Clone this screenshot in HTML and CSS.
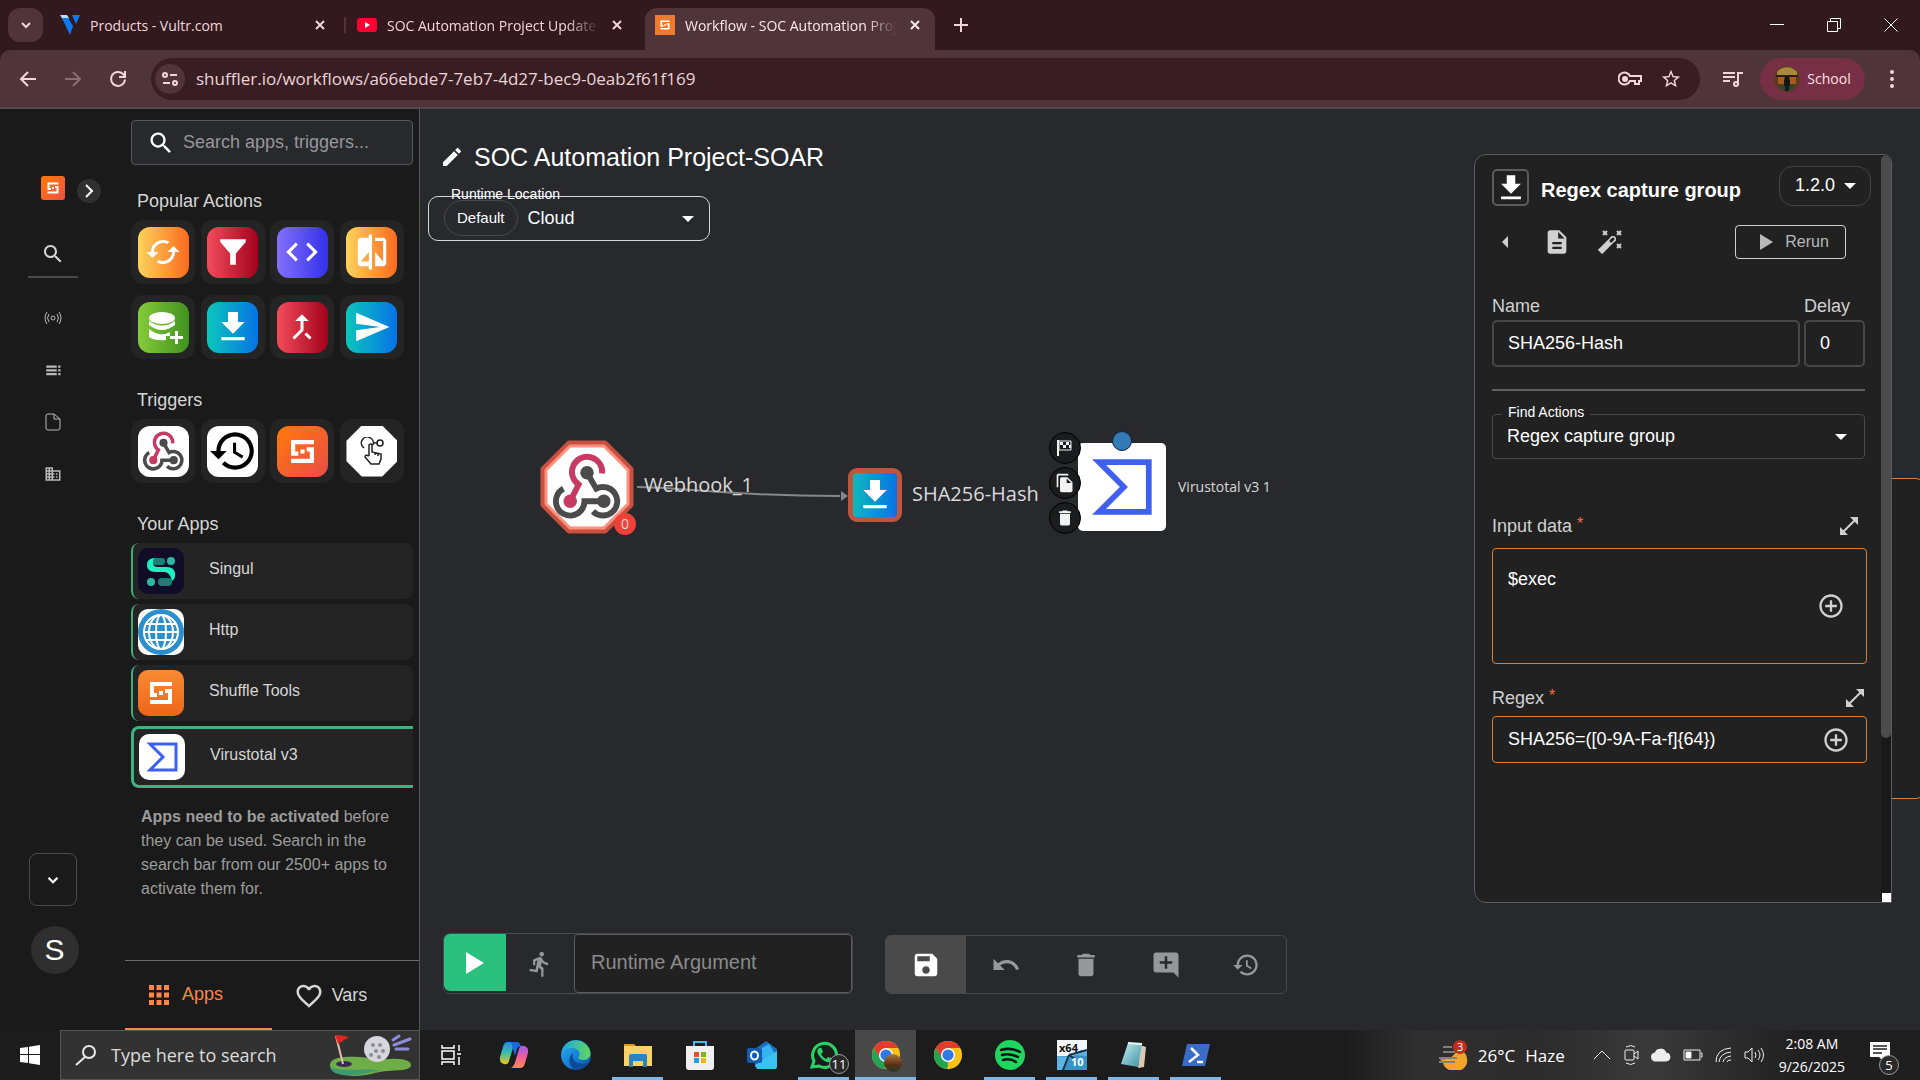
FILE: index.html
```html
<!DOCTYPE html>
<html lang="en">
<head>
  <meta charset="UTF-8" />
  <meta name="viewport" content="width=device-width, initial-scale=1.0" />
  <title>Workflow - SOC Automation Project-SOAR</title>
  <link rel="stylesheet" href="styles.css">
</head>
<body>

  <!-- shared icons -->
  <svg class="defs" width="0" height="0" aria-hidden="true">
    <defs>
      <linearGradient id="g-edge" x1="0" y1="0" x2="1" y2="1"><stop offset="0" stop-color="#2bb6e8"/><stop offset=".5" stop-color="#1583d8"/><stop offset="1" stop-color="#0c4ea0"/></linearGradient>
      <linearGradient id="g-edge2"><stop offset="0" stop-color="#1fa6e4"/><stop offset="1" stop-color="#60d95c"/></linearGradient>
      <linearGradient id="g-cop1" x1="0" y1="0" x2="0" y2="1"><stop offset="0" stop-color="#1b8df0"/><stop offset=".5" stop-color="#38c0a5"/><stop offset="1" stop-color="#f2c515"/></linearGradient>
      <linearGradient id="g-cop2" x1="0" y1="0" x2="0" y2="1"><stop offset="0" stop-color="#a05cf0"/><stop offset=".5" stop-color="#ee5f9c"/><stop offset="1" stop-color="#fb8a4c"/></linearGradient>
      <linearGradient id="g-note" x1="0" y1="0" x2="1" y2="1"><stop offset="0" stop-color="#c5eef2"/><stop offset="1" stop-color="#3d8ea3"/></linearGradient>
    </defs>
    <symbol id="i-search" viewBox="0 0 24 24"><path d="M15.5 14h-.79l-.28-.27C15.41 12.59 16 11.11 16 9.5 16 5.91 13.09 3 9.5 3S3 5.91 3 9.5 5.91 16 9.5 16c1.61 0 3.09-.59 4.23-1.57l.27.28v.79l5 4.99L20.49 19l-4.99-5zm-6 0C7.01 14 5 11.99 5 9.5S7.01 5 9.5 5 14 7.01 14 9.5 11.99 14 9.5 14z"/></symbol>
    <symbol id="i-close" viewBox="0 0 24 24"><path d="M6 6l12 12M18 6L6 18" fill="none" stroke="currentColor" stroke-width="3"/></symbol>
    <symbol id="i-chevron" viewBox="0 0 24 24"><path d="M6 9l6 6 6-6" fill="none" stroke="currentColor" stroke-width="3"/></symbol>
    <symbol id="i-shuffle" viewBox="0 0 24 24"><path d="M23 3H3v11h5M1 21h20V10h-5" fill="none" stroke="currentColor" stroke-width="4"/><path d="M10 10h4v4h-4z"/></symbol>
    <symbol id="i-download" viewBox="0 0 24 24"><path d="M19 9h-4V3H9v6H5l7 7 7-7zM5 18v2h14v-2H5z"/></symbol>
    <symbol id="i-history" viewBox="0 0 24 24"><path d="M13 3c-4.97 0-9 4.03-9 9H1l3.89 3.89.07.14L9 12H6c0-3.87 3.13-7 7-7s7 3.13 7 7-3.13 7-7 7c-1.93 0-3.68-.79-4.94-2.06l-1.42 1.42C8.27 19.99 10.51 21 13 21c4.97 0 9-4.03 9-9s-4.03-9-9-9zm-1 5v5l4.28 2.54.72-1.21-3.5-2.08V8H12z"/></symbol>
    <symbol id="i-trash" viewBox="0 0 24 24"><path d="M6 19c0 1.1.9 2 2 2h8c1.1 0 2-.9 2-2V7H6v12zM19 4h-3.5l-1-1h-5l-1 1H5v2h14V4z"/></symbol>
    <symbol id="i-plus" viewBox="0 0 24 24"><path d="M13 7h-2v4H7v2h4v4h2v-4h4v-2h-4V7zm-1-5C6.48 2 2 6.48 2 12s4.48 10 10 10 10-4.48 10-10S17.52 2 12 2zm0 18c-4.41 0-8-3.59-8-8s3.59-8 8-8 8 3.59 8 8-3.59 8-8 8z"/></symbol>
    <symbol id="i-expand" viewBox="0 0 24 24"><path d="M21 11V3h-8l3.29 3.29-10 10L3 13v8h8l-3.29-3.29 10-10z"/></symbol>
    <symbol id="i-caret" viewBox="0 0 12 6"><path d="M0 0h12L6 6z"/></symbol>
    <symbol id="i-webhook" viewBox="0 0 100 100">
      <g fill="none" stroke-width="7">
        <path d="M68 34A18 18 0 1 0 40 47L30 67" stroke="#c73a63"/>
        <path d="M22 52A17 17 0 1 0 47 67H70" stroke="#4b4b4b"/>
        <path d="M50 33l11 19A17 17 0 1 1 57 79" stroke="#4b4b4b"/>
      </g>
      <circle cx="50" cy="33" r="8" fill="#4b4b4b"/><circle cx="30" cy="67" r="8" fill="#c73a63"/><circle cx="70" cy="67" r="8" fill="#4b4b4b"/>
    </symbol>
    <symbol id="i-virustotal" viewBox="0 0 46 46"><path d="M11 10h26v26H11l13-13z" fill="none" stroke="#3f5fef" stroke-width="3"/></symbol>
    <symbol id="i-chrome" viewBox="0 0 32 32">
      <circle cx="16" cy="16" r="15" fill="#fbc116"/>
      <path d="M3 8.500A15 15 0 0 1 29 8.500H16L9.500 19.700z" fill="#e33b2e"/>
      <path d="M3 8.500l7 11.800 6 3.200-.5 7.500A15 15 0 0 1 3 8.500z" fill="#23a455"/>
      <path d="M16 31l6.500-11.500" stroke="#fbc116" stroke-width="2"/>
      <circle cx="16" cy="16" r="7.500" fill="#fff"/><circle cx="16" cy="16" r="6" fill="#2f78e8"/>
    </symbol>
  </svg>

  <header class="browser">
    <div class="tab-strip">
      <button class="tab-list" aria-label="Search tabs"><svg width="16" height="16"><use href="#i-chevron"/></svg></button>
      <div class="tab tab-first">
        <svg width="20" height="20" viewBox="0 0 20 20"><path d="M0 0h7l2 3-4 5z" fill="#b8dcff"/><path d="M2 3h6l5 8-3 9z" fill="#0a7cf5"/><path d="M12 0h8l-4 9z" fill="#0a7cf5"/></svg>
        <span class="tab-title">Products - Vultr.com</span>
        <button class="tab-close" aria-label="Close tab"><svg width="16" height="16"><use href="#i-close"/></svg></button>
      </div>
      <div class="tab tab-second">
        <svg width="20" height="20" viewBox="0 0 20 20"><rect y="3" width="20" height="14" rx="3" fill="#ff0033"/><path d="M8 7l5 3-5 3z" fill="#fff"/></svg>
        <span class="tab-title">SOC Automation Project Update</span>
        <button class="tab-close" aria-label="Close tab"><svg width="16" height="16"><use href="#i-close"/></svg></button>
      </div>
      <div class="tab tab-active">
        <span class="favicon"><svg width="10" height="10"><use href="#i-shuffle"/></svg></span>
        <span class="tab-title">Workflow - SOC Automation Project</span>
        <button class="tab-close" aria-label="Close tab"><svg width="16" height="16"><use href="#i-close"/></svg></button>
      </div>
      <button class="new-tab" aria-label="New tab"><svg width="14" height="14" viewBox="0 0 14 14"><path d="M7 0v14M0 7h14" stroke="currentColor" stroke-width="2"/></svg></button>
      <div class="window-buttons">
        <button aria-label="Minimize"><svg width="14" height="14" viewBox="0 0 14 14"><path d="M0 6.500h14"/></svg></button>
        <button aria-label="Restore"><svg width="14" height="14" viewBox="0 0 14 14"><path d="M.5 3.500h10v10H.5zM3.500 3V.5h10v10H11"/></svg></button>
        <button aria-label="Close"><svg width="14" height="14" viewBox="0 0 14 14"><path d="M.5.5l13 13M13.500.5l-13 13"/></svg></button>
      </div>
    </div>

    <div class="toolbar">
      <button class="nav-btn" aria-label="Back"><svg width="18" height="18" viewBox="0 0 18 18"><path d="M17 9H2M9 2L2 9l7 7"/></svg></button>
      <button class="nav-btn dim" aria-label="Forward"><svg width="18" height="18" viewBox="0 0 18 18"><path d="M1 9h15M9 2l7 7-7 7"/></svg></button>
      <button class="nav-btn" aria-label="Reload"><svg width="18" height="18" viewBox="0 0 18 18"><path d="M16 9.500A7 7 0 1 1 14 4l2 2.500M16 1v6h-6"/></svg></button>
      <div class="omnibox">
        <button class="site-info" aria-label="Site information"><svg width="18" height="18" viewBox="0 0 18 18" fill="none" stroke="currentColor" stroke-width="2"><circle cx="4" cy="5" r="2"/><path d="M9 5h7M2 13h7"/><circle cx="14" cy="13" r="2"/></svg></button>
        <input type="text" aria-label="Address" value="shuffler.io/workflows/a66ebde7-7eb7-4d27-bec9-0eab2f61f169">
        <button aria-label="Passwords"><svg width="24" height="16" viewBox="0 0 24 16" fill="none" stroke="currentColor" stroke-width="2"><path d="M12 5h11v5h-2v3h-4v-3h-5A6 6 0 1 1 12 5z"/><circle cx="7" cy="8" r="2" fill="currentColor"/></svg></button>
        <button aria-label="Bookmark"><svg width="22" height="22" viewBox="0 0 24 24"><path d="M22 9.240l-7.190-.62L12 2 9.190 8.630 2 9.240l5.460 4.730L5.820 21 12 17.270 18.180 21l-1.630-7.030L22 9.240zM12 15.400l-3.760 2.270 1-4.280-3.320-2.880 4.380-.38L12 6.100l1.710 4.040 4.380.38-3.320 2.880 1 4.280L12 15.400z"/></svg></button>
      </div>
      <button class="nav-btn media" aria-label="Media controls"><svg width="20" height="18" viewBox="0 0 20 18"><path d="M0 3h12M0 7h12M0 11h7M15 14V3h5"/><circle cx="13" cy="14" r="2"/></svg></button>
      <button class="profile">
        <svg width="26" height="26" viewBox="0 0 26 26"><circle cx="13" cy="13" r="13" fill="#5a3c1c"/><path d="M3 6a13 13 0 0 1 20 0v3H3z" fill="#a8893a"/><path d="M2 9h22v2H2z" fill="#2e1d10"/><path d="M4 11h18v7H4z" fill="#a85a20"/><path d="M11 10h4l1 5v8h-6v-8z" fill="#171510"/><path d="M4 20h18a13 13 0 0 1-18 0z" fill="#1b4a40"/><path d="M11 17h4v8h-4z" fill="#101a1a"/></svg>
        School
      </button>
      <button class="more" aria-label="Menu"><svg width="6" height="20" viewBox="0 0 6 20"><circle cx="3" cy="3" r="2"/><circle cx="3" cy="10" r="2"/><circle cx="3" cy="17" r="2"/></svg></button>
    </div>
  </header>

  <main class="page">
    <nav class="rail">
      <a href="#" class="rail-logo" aria-label="Shuffle"><svg width="12" height="12"><use href="#i-shuffle"/></svg></a>
      <button class="rail-toggle" aria-label="Expand"><svg width="14" height="14" viewBox="0 0 14 14"><path d="M4 1l6 6-6 6" fill="none" stroke="currentColor" stroke-width="2"/></svg></button>
      <button class="rail-search" aria-label="Search"><svg width="24" height="24"><use href="#i-search"/></svg></button>
      <div class="rail-links">
        <a href="#" aria-label="Status"><svg width="18" height="18" viewBox="0 0 18 18" fill="none" stroke="currentColor"><circle cx="9" cy="9" r="2"/><path d="M5 5q-3 4 0 8M13 5q3 4 0 8M3 3q-4 6 0 12M15 3q4 6 0 12"/></svg></a>
        <a href="#" aria-label="Workflows"><svg width="18" height="18" viewBox="0 0 24 24"><path d="M3 9h14V6H3v3zm0 5h14v-3H3v3zm0 5h14v-3H3v3zm16 0h3v-3h-3v3zm0-13v3h3V6h-3zm0 8h3v-3h-3v3z"/></svg></a>
        <a href="#" aria-label="Files"><svg width="18" height="18" viewBox="0 0 18 18" fill="none" stroke="currentColor"><path d="M10 1H4a2 2 0 0 0-2 2v12a2 2 0 0 0 2 2h10a2 2 0 0 0 2-2V6zM10 1v5h6"/></svg></a>
        <a href="#" aria-label="Organization"><svg width="18" height="18" viewBox="0 0 24 24"><path d="M12 7V3H2v18h20V7H12zM6 19H4v-2h2v2zm0-4H4v-2h2v2zm0-4H4V9h2v2zm0-4H4V5h2v2zm4 12H8v-2h2v2zm0-4H8v-2h2v2zm0-4H8V9h2v2zm0-4H8V5h2v2zm10 12h-8v-2h2v-2h-2v-2h2v-2h-2V9h8v10zm-2-8h-2v2h2v-2zm0 4h-2v2h2v-2z"/></svg></a>
      </div>
      <div class="rail-bottom">
        <button class="rail-more" aria-label="Switch organization"><svg width="18" height="18"><use href="#i-chevron"/></svg></button>
        <button class="avatar">S</button>
      </div>
    </nav>

    <aside class="sidebar">
      <div class="sidebar-body">
        <div class="app-search">
          <svg width="28" height="28"><use href="#i-search"/></svg>
          <input type="text" aria-label="Search apps" placeholder="Search apps, triggers...">
        </div>

        <h2 class="first">Popular Actions</h2>
        <div class="tiles">
          <button aria-label="Repeat"><span class="tile amber"><svg width="36" height="36" viewBox="0 0 24 24"><path d="M19 8l-4 4h3c0 3.310-2.690 6-6 6-1.010 0-1.970-.25-2.800-.7l-1.460 1.460C8.970 19.540 10.430 20 12 20c4.420 0 8-3.580 8-8h3l-4-4zM6 12c0-3.310 2.690-6 6-6 1.010 0 1.970.25 2.800.7l1.460-1.460C15.030 4.460 13.570 4 12 4c-4.420 0-8 3.580-8 8H1l4 4 4-4H6z"/></svg></span></button>
          <button aria-label="Filter"><span class="tile red"><svg width="34" height="34" viewBox="0 0 24 24"><path d="M3 3h18v2l-7 8v8h-4v-8L3 5z"/></svg></span></button>
          <button aria-label="Run code"><span class="tile violet"><svg width="38" height="38" viewBox="0 0 24 24"><path d="M9.400 16.600L4.800 12l4.600-4.600L8 6l-6 6 6 6 1.400-1.400zm5.200 0l4.600-4.600-4.600-4.600L16 6l6 6-6 6-1.400-1.400z"/></svg></span></button>
          <button aria-label="Compare"><span class="tile amber"><svg width="38" height="38" viewBox="0 0 24 24"><path d="M10 3H5c-1.100 0-2 .9-2 2v14c0 1.100.9 2 2 2h5v2h2V1h-2v2zm0 15H5l5-6v6zm9-15h-5v2h5v13l-5-6v9h5c1.100 0 2-.9 2-2V5c0-1.100-.9-2-2-2z"/></svg></span></button>
          <button aria-label="Add to database"><span class="tile green"><svg width="40" height="40" viewBox="0 0 40 40"><ellipse cx="19" cy="11" rx="13" ry="6"/><path d="M6 14q13 9 26 0v4q-13 10-26 0zM6 22q11 9 21 3v4h-4v4Q12 34 6 30zM32 24h3v5h5v3h-5v5h-3v-5h-5v-3h5z"/></svg></span></button>
          <button aria-label="Download"><span class="tile teal"><svg width="40" height="40"><use href="#i-download"/></svg></span></button>
          <button aria-label="Merge"><span class="tile red"><svg width="36" height="36" viewBox="0 0 24 24"><path d="M17 20.410L18.410 19 15 15.590 13.590 17 17 20.410zM7.500 8H11v5.590L5.590 19 7 20.410l6-6V8h3.500L12 3.500 7.500 8z"/></svg></span></button>
          <button aria-label="Send"><span class="tile teal"><svg width="38" height="38" viewBox="0 0 24 24"><path d="M2 21L23 12 2 3v7l15 2-15 2z"/></svg></span></button>
        </div>

        <h2>Triggers</h2>
        <div class="tiles">
          <button aria-label="Webhook"><span class="tile white"><svg width="51" height="51"><use href="#i-webhook"/></svg></span></button>
          <button aria-label="Schedule"><span class="tile white black-icon"><svg width="50" height="50"><use href="#i-history"/></svg></span></button>
          <button aria-label="Subflow"><span class="tile orange"><svg width="25" height="25"><use href="#i-shuffle"/></svg></span></button>
          <button aria-label="User input"><span class="tile octagon"><svg width="26" height="28" viewBox="0 0 26 28" fill="none" stroke="#222" stroke-width="1.500"><path d="M5 11A6 6 0 1 1 14 8M14 6h4M10 19V8q2-2 3 0v7l9 2v5l-2 5h-8l-6-7q0-3 4-1M16 15v3M19 16v3"/><circle cx="21" cy="6" r="3"/></svg></span></button>
        </div>

        <h2>Your Apps</h2>
        <ul class="apps">
          <li>
            <span class="app-icon navy"><svg width="46" height="46" viewBox="0 0 46 46"><rect x="14" y="10" width="13" height="7" rx="3" fill="#1c7f76"/><circle cx="33" cy="13" r="4" fill="#2bb8a4"/><circle cx="13" cy="34" r="4" fill="#2bb8a4"/><rect x="20" y="30" width="14" height="8" rx="4" fill="#1c7f76"/><path d="M17 10q-8 0-8 7t8 7h9q6 0 8 9 4-3 3-8-1-6-8-6h-9q-5 0-5-4t2-5z" fill="#1df0c2"/></svg></span>
            <a href="#">Singul</a>
          </li>
          <li>
            <span class="app-icon"><svg width="46" height="46" viewBox="0 0 46 46"><circle cx="23" cy="23" r="23" fill="#2b8fce"/><g fill="none" stroke="#fff" stroke-width="2"><circle cx="23" cy="23" r="17"/><ellipse cx="23" cy="23" rx="5" ry="17"/><ellipse cx="23" cy="23" rx="12" ry="17"/><path d="M6 23h34M8 15h30M8 31h30"/></g></svg></span>
            <a href="#">Http</a>
          </li>
          <li>
            <span class="app-icon tools"><svg width="24" height="24"><use href="#i-shuffle"/></svg></span>
            <a href="#">Shuffle Tools</a>
          </li>
          <li class="selected">
            <span class="app-icon"><svg width="46" height="46"><use href="#i-virustotal"/></svg></span>
            <a href="#">Virustotal v3</a>
          </li>
        </ul>

        <p class="note"><b>Apps need to be activated</b> before they can be used. Search in the search bar from our 2500+ apps to activate them for.</p>
      </div>

      <div class="side-tabs">
        <button class="active"><svg width="30" height="30" viewBox="0 0 24 24"><path d="M4 8h4V4H4v4zm6 12h4v-4h-4v4zm-6 0h4v-4H4v4zm0-6h4v-4H4v4zm6 0h4v-4h-4v4zm6-10v4h4V4h-4zm-6 4h4V4h-4v4zm6 6h4v-4h-4v4zm0 6h4v-4h-4v4z"/></svg>Apps</button>
        <button><svg width="30" height="30" viewBox="0 0 24 24"><path d="M16.500 3c-1.740 0-3.410.81-4.500 2.090C10.910 3.810 9.240 3 7.500 3 4.420 3 2 5.420 2 8.500c0 3.780 3.400 6.860 8.550 11.540L12 21.350l1.450-1.320C18.600 15.360 22 12.280 22 8.500 22 5.420 19.580 3 16.500 3zm-4.400 15.550l-.1.1-.1-.1C7.140 14.240 4 11.390 4 8.500 4 6.500 5.500 5 7.500 5c1.540 0 3.040.99 3.570 2.360h1.870C13.460 5.990 14.960 5 16.500 5c2 0 3.500 1.500 3.500 3.500 0 2.890-3.140 5.740-7.900 10.050z"/></svg>Vars</button>
      </div>
    </aside>

    <section class="canvas">
      <!-- graph -->
      <div class="graph">
        <svg class="edges" width="520" height="420"><path d="M217 378C260 378 300 387 420 387" fill="none" stroke="#85878a" stroke-width="2"/><path d="M421 382l7 5-7 5z" fill="#85878a"/></svg>
        <div class="node webhook">
          <svg width="94" height="94" viewBox="0 0 94 94"><path d="M29 3h36l26 26v36L65 91H29L3 65V29z" fill="#fff" stroke="#c9503e" stroke-width="5" stroke-linejoin="round"/><path d="M30 6h34l24 24v34L64 88H30L6 64V30z" fill="none" stroke="#ff8f7e" stroke-width="3"/><use href="#i-webhook" x="5" y="5" width="84" height="84"/></svg>
          <span class="count">0</span>
        </div>
        <span class="node-label webhook-label">Webhook_1</span>
        <div class="node regex"><svg width="40" height="40"><use href="#i-download"/></svg></div>
        <span class="node-label regex-label">SHA256-Hash</span>
        <div class="node virus"><svg width="88" height="88"><use href="#i-virustotal"/></svg></div>
        <div class="node-actions">
          <button aria-label="Set as start node"><svg width="16" height="16" viewBox="0 0 16 16"><path d="M1 0v16" stroke="currentColor" stroke-width="2"/><path d="M2 1h12v9H2z" fill="none" stroke="currentColor"/><path d="M3 2h3v3H3zM9 2h3v3H9zM6 5h3v3H6zM12 5h2v3h-2z"/></svg></button>
          <button aria-label="Copy node"><svg width="20" height="20" viewBox="0 0 24 24"><path d="M16 1H4c-1.100 0-2 .9-2 2v14h2V3h12V1zm-1 4l6 6v10c0 1.100-.9 2-2 2H8c-1.110 0-2-.9-2-2V7c0-1.100.89-2 2-2h7zm-1 7h5.500L14 6.500V12z"/></svg></button>
          <button aria-label="Delete node"><svg width="20" height="20"><use href="#i-trash"/></svg></button>
        </div>
        <span class="handle"></span>
        <span class="virus-label">Virustotal v3 1</span>
        <div class="hidden-panel"></div>
      </div>

      <div class="canvas-head">
        <h1><svg width="24" height="24" viewBox="0 0 24 24"><path d="M3 17.250V21h3.750L17.810 9.940l-3.750-3.750L3 17.250zM20.710 7.040c.39-.39.39-1.020 0-1.410l-2.340-2.340c-.39-.39-1.020-.39-1.410 0l-1.830 1.830 3.750 3.750 1.830-1.830z"/></svg>SOC Automation Project-SOAR</h1>
        <div class="runtime">
          <label for="runtime">Runtime Location</label>
          <span class="chip">Default</span>
          <select id="runtime"><option>Cloud</option></select>
          <svg class="caret" width="12" height="6"><use href="#i-caret"/></svg>
        </div>
      </div>

      <div class="canvas-foot">
        <div class="run-bar">
          <button class="play" aria-label="Run workflow"><svg width="18" height="22" viewBox="0 0 18 22"><path d="M0 0l18 11L0 22z"/></svg></button>
          <button class="walk" aria-label="Explore runs"><svg width="28" height="28" viewBox="0 0 24 24"><path d="M13.490 5.480c1.100 0 2-.9 2-2s-.9-2-2-2-2 .9-2 2 .9 2 2 2zm-3.600 13.900l1-4.400 2.100 2v6h2v-7.500l-2.100-2 .6-3c1.300 1.500 3.300 2.500 5.500 2.500v-2c-1.900 0-3.500-1-4.300-2.400l-1-1.600c-.4-.6-1-1-1.700-1-.3 0-.5.1-.8.1l-5.200 2.200v4.700h2v-3.400l1.800-.7-1.600 8.100-4.900-1-.4 2 7 1.400z"/></svg></button>
          <input type="text" aria-label="Runtime Argument" placeholder="Runtime Argument">
        </div>
        <div class="tool-bar">
          <button class="save" aria-label="Save"><svg width="30" height="30" viewBox="0 0 24 24"><path d="M17 3H5c-1.110 0-2 .9-2 2v14c0 1.100.89 2 2 2h14c1.100 0 2-.9 2-2V7l-4-4zm-5 16c-1.660 0-3-1.340-3-3s1.340-3 3-3 3 1.340 3 3-1.340 3-3 3zm3-10H5V5h10v4z"/></svg></button>
          <button aria-label="Undo"><svg width="30" height="30" viewBox="0 0 24 24"><path d="M12.500 8c-2.650 0-5.050.99-6.900 2.600L2 7v9h9l-3.620-3.620c1.390-1.160 3.160-1.880 5.120-1.880 3.540 0 6.550 2.310 7.600 5.500l2.370-.78C21.080 11.030 17.150 8 12.500 8z"/></svg></button>
          <button aria-label="Delete"><svg width="30" height="30"><use href="#i-trash"/></svg></button>
          <button aria-label="Add comment"><svg width="30" height="30" viewBox="0 0 24 24"><path d="M22 4c0-1.100-.9-2-2-2H4c-1.100 0-2 .9-2 2v12c0 1.100.9 2 2 2h14l4 4V4zM17 11h-4v4h-2v-4H7V9h4V5h2v4h4v2z"/></svg></button>
          <button aria-label="History"><svg width="28" height="28"><use href="#i-history"/></svg></button>
        </div>
      </div>

      <!-- action settings -->
      <form class="panel">
        <div class="panel-head">
          <span class="panel-icon"><svg width="34" height="34"><use href="#i-download"/></svg></span>
          <h2>Regex capture group</h2>
          <div class="version">
            <select aria-label="Version"><option>1.2.0</option></select>
            <svg class="caret" width="12" height="6"><use href="#i-caret"/></svg>
          </div>
        </div>
        <div class="panel-tools">
          <button type="button" aria-label="Previous"><svg width="6" height="12" viewBox="0 0 6 12"><path d="M6 0v12L0 6z"/></svg></button>
          <button type="button" aria-label="Documentation"><svg width="28" height="28" viewBox="0 0 24 24"><path d="M14 2H6c-1.100 0-2 .9-2 2v16c0 1.100.9 2 2 2h12c1.100 0 2-.9 2-2V8l-6-6zm2 16H8v-2h8v2zm0-4H8v-2h8v2zm-3-5V3.500L18.500 9H13z"/></svg></button>
          <button type="button" aria-label="Autocomplete"><svg width="24" height="24" viewBox="0 0 24 24"><path d="M2 22L16 8" stroke="currentColor" stroke-width="6"/><circle cx="15" cy="9" r="3"/><path d="M13 11l2-2" stroke="#212121" stroke-width="3" stroke-linecap="round"/><path d="M5 1l4 4M9 1L5 5M19 1l4 4M23 1l-4 4M19 14l4 4M23 14l-4 4" stroke="currentColor" stroke-width="2"/></svg></button>
          <button type="button" class="rerun"><svg width="13" height="16" viewBox="0 0 13 16"><path d="M0 0l13 8-13 8z"/></svg>Rerun</button>
        </div>
        <div class="name-row">
          <div class="name-field"><label for="name">Name</label><input type="text" id="name" value="SHA256-Hash"></div>
          <div class="delay-field"><label for="delay">Delay</label><input type="text" id="delay" value="0"></div>
        </div>
        <hr>
        <div class="find">
          <label for="find">Find Actions</label>
          <select id="find"><option>Regex capture group</option></select>
          <svg class="caret" width="12" height="6"><use href="#i-caret"/></svg>
        </div>
        <div class="param-head input-head">
          <label for="input-data">Input data <sup>*</sup></label>
          <button type="button" aria-label="Expand input data"><svg width="24" height="24"><use href="#i-expand"/></svg></button>
        </div>
        <div class="param tall">
          <textarea id="input-data">$exec</textarea>
          <button type="button" aria-label="Insert variable"><svg width="28" height="28"><use href="#i-plus"/></svg></button>
        </div>
        <div class="param-head regex-head">
          <label for="regex">Regex <sup>*</sup></label>
          <button type="button" aria-label="Expand regex"><svg width="24" height="24"><use href="#i-expand"/></svg></button>
        </div>
        <div class="param">
          <input type="text" id="regex" value="SHA256=([0-9A-Fa-f]{64})">
          <button type="button" aria-label="Insert variable"><svg width="28" height="28"><use href="#i-plus"/></svg></button>
        </div>
        <span class="scroll-track"><span class="scroll-thumb"></span><span class="scroll-corner"></span></span>
      </form>
    </section>
  </main>

  <footer class="taskbar">
    <button class="start" aria-label="Start"><svg width="20" height="20" viewBox="0 0 20 20"><path d="M0 3l8-1v7H0zM9 1.800L20 0v9H9zM0 10h8v8l-8-1zM9 10h11v10L9 18.200z" fill="#fff"/></svg></button>
    <div class="task-search">
      <svg width="22" height="22" viewBox="0 0 22 22" fill="none" stroke="#e8e8e8" stroke-width="2"><circle cx="14" cy="8" r="6"/><path d="M10 13l-9 8"/></svg>
      <input type="text" aria-label="Search" placeholder="Type here to search">
      <svg width="84" height="44" viewBox="0 0 84 44"><path d="M1 32c0-8 16-9 28-8 18 1 20 3 32 2 14-1 22 2 21 7-2 5-14 4-24 5-12 1-20 5-32 5S1 38 1 32z" fill="#6fae46"/><path d="M1 34c2 8 14 9 26 8 10-1 16-4 24-4-14-4-36 2-50-4z" fill="#3e9a72"/><ellipse cx="15" cy="31" rx="8" ry="3" fill="#3b2b52"/><path d="M7 3l7 28" stroke="#e8b9a5" stroke-width="2"/><path d="M6 2q8 0 14 2l-11 7z" fill="#e02424"/><circle cx="48" cy="16" r="13" fill="#d6d6dc"/><g fill="#8c8d96"><circle cx="44" cy="12" r="2"/><circle cx="51" cy="12" r="2"/><circle cx="47" cy="18" r="2"/><circle cx="54" cy="18" r="2"/><circle cx="50" cy="24" r="2"/><circle cx="42" cy="22" r="2"/></g><path d="M64 7l6-4M65 12l16-6M67 16h12" stroke="#8d8bd8" stroke-width="3" stroke-linecap="round"/></svg>
    </div>
    <div class="task-apps">
      <button aria-label="Task view"><svg width="22" height="20" viewBox="0 0 22 20" fill="none" stroke="#fff" stroke-width="1.500"><path d="M1 0v3h12V0M1 6h12v8H1zM1 20v-3h12v3M18 0v6M18 12v8M16 9h4"/></svg></button>
      <button aria-label="Copilot"><svg width="30" height="28" viewBox="0 0 30 28"><path d="M9 1h9q-3 1-5 9l-3 10q-1 4-5 3-5-1-4-7l3-10q1-5 5-5z" fill="url(#g-cop1)"/><path d="M21 27h-9q3-1 5-9l3-10q1-4 5-3 5 1 4 7l-3 10q-1 5-5 5z" fill="url(#g-cop2)"/><path d="M12 1h7q2 1 3 4-3 0-4 3l-2 7z" fill="#1769dc"/></svg></button>
      <button aria-label="Edge"><svg width="30" height="30" viewBox="0 0 30 30"><circle cx="15" cy="15" r="15" fill="url(#g-edge)"/><path d="M1 11C4 1 14-2 23 3c8 5 9 16 0 17-5 0-7-2-5-4 2-4-2-8-7-8-4 0-8 1-10 3z" fill="url(#g-edge2)"/><path d="M12 13c-2 7 4 13 16 10-4 5-9 7-14 7-6-3-8-13-2-17z" fill="#0d4b98"/></svg></button>
      <button aria-label="File Explorer" class="open"><svg width="30" height="26" viewBox="0 0 30 26"><path d="M1 2h10l3 3H1z" fill="#dd9a16"/><path d="M1 4h28v20H1z" fill="#fbd065"/><path d="M6 14q0-2 2-2h14q2 0 2 2v11h-4v-6H10v6H6z" fill="#2d82c4"/></svg></button>
      <button aria-label="Microsoft Store"><svg width="30" height="30" viewBox="0 0 30 30"><path d="M9 8V2h12v6" fill="none" stroke="#3bb8ef" stroke-width="2"/><path d="M1 6h28v21q0 3-3 3H4q-3 0-3-3z" fill="#f0f0f0"/><path d="M9 12h5v5H9z" fill="#e8502c"/><path d="M16 12h5v5h-5z" fill="#7cb51c"/><path d="M9 18h5v5H9z" fill="#1d9fe0"/><path d="M16 18h5v5h-5z" fill="#f5b40f"/></svg></button>
      <button aria-label="Outlook"><svg width="30" height="28" viewBox="0 0 30 28"><path d="M8 8l11-8 11 8v18H8z" fill="#1b6fc2"/><path d="M13 8l9-5 6 10-12 7z" fill="#33b4ef"/><path d="M8 24l22-14v16q0 2-2 2H10z" fill="#38c3f2"/><rect y="7" width="15" height="15" rx="2" fill="#0f5cb0"/><ellipse cx="7.500" cy="14.500" rx="3.500" ry="4" fill="none" stroke="#fff" stroke-width="2"/></svg></button>
      <button aria-label="WhatsApp" class="open"><svg width="30" height="30" viewBox="0 0 30 30"><path d="M3 27l2-6A12 12 0 1 1 10 26z" fill="none" stroke="#25d366" stroke-width="3"/><path d="M10 8q2-1 3 1l1 3-2 2q2 4 5 5l2-2 3 1q1 3-2 4-4 1-9-5-5-6-1-9z" fill="#25d366"/></svg><span class="badge">11</span></button>
      <button aria-label="Chrome School" class="open current"><svg width="30" height="30"><use href="#i-chrome"/></svg><span class="mini"></span></button>
      <button aria-label="Chrome"><svg width="30" height="30"><use href="#i-chrome"/></svg></button>
      <button aria-label="Spotify" class="open"><svg width="30" height="30" viewBox="0 0 30 30"><circle cx="15" cy="15" r="15" fill="#1ed760"/><path d="M6 10q10-3 19 2M7 15q8-2 16 2M8 20q7-2 13 2" fill="none" stroke="#141414" stroke-width="2.500" stroke-linecap="round"/></svg></button>
      <button aria-label="x64dbg" class="open"><svg width="30" height="30" viewBox="0 0 30 30"><path d="M0 0h30v30H0z" fill="#3b92c8"/><path d="M0 0h30v13L12 16H0z" fill="#f2f6f8"/><path d="M0 16l13 1-8 13H0zM16 15l8-5h6v6z" fill="#5fb3e2"/><path d="M12 15l-6 15M12 15l18-5M12 15l6 4" stroke="#16344a" stroke-width="2"/><text x="2" y="12" class="dbg dark">x64</text><text x="14" y="26" class="dbg">10</text></svg></button>
      <button aria-label="Notepad" class="open"><svg width="28" height="28" viewBox="0 0 28 28"><path d="M20 4l6 2-2 20-6 1z" fill="#d9c8b4"/><path d="M8 2l14 1-4 23L1 23z" fill="url(#g-note)"/><path d="M8 2l14 1" stroke="#eaf7f9" stroke-width="2"/></svg></button>
      <button aria-label="PowerShell" class="open"><svg width="30" height="24" viewBox="0 0 30 24"><path d="M6 1h23l-5 22H1z" fill="#3a6bc9"/><path d="M10 5l7 7-9 7M16 19h6" fill="none" stroke="#fff" stroke-width="2.500"/></svg></button>
    </div>
    <div class="tray">
      <span class="weather">
        <svg width="30" height="30" viewBox="0 0 30 30"><path d="M2 19q12 2 18-10 9 3 9 10a12 10 0 0 1-24 4z" fill="#f2a52a"/><path d="M5 7h9M5 12h12M1 18h18M1 22h16" stroke="#7d7f82" stroke-width="2"/><circle cx="22" cy="7" r="7" fill="#c42b1c"/><text x="19" y="11">3</text></svg>
        <span>26°C</span><span>Haze</span>
      </span>
      <span class="tray-icons">
        <svg width="18" height="10" viewBox="0 0 18 10"><path d="M1 9l8-8 8 8"/></svg>
        <svg width="16" height="20" viewBox="0 0 16 20"><rect x="2" y="5" width="9" height="10" rx="1"/><path d="M11 9l4-3v8l-4-3M3 2q5-3 9 0M3 18q5 3 9 0"/></svg>
        <svg width="20" height="14" viewBox="0 0 20 14"><path d="M5 13a4 4 0 0 1-1-8q1-4 6-4 4 0 5 4 4 0 4 4t-4 4z" fill="#eee"/></svg>
        <svg width="20" height="12" viewBox="0 0 20 12"><path d="M1 1h16v10H1zM18 4h1v4h-1"/><path d="M3 3h5v6H3z" fill="#fff"/></svg>
        <svg width="17" height="16" viewBox="0 0 17 16"><path d="M1 15Q1 2 16 1M4 15Q5 6 16 5M8 15q1-5 8-6M12 15q0-2 4-2"/></svg>
        <svg width="20" height="16" viewBox="0 0 20 16"><path d="M1 5h3l4-4v14l-4-4H1zM11 5q2 3 0 6M14 3q4 5 0 10M17 1q5 7 0 14"/></svg>
      </span>
      <span class="clock"><span>2:08 AM</span><span>9/26/2025</span></span>
      <button class="notices" aria-label="Notifications"><svg width="20" height="20" viewBox="0 0 20 20"><path d="M0 0h20v15h-6v5l-5-5H0z" fill="#fff"/><path d="M3 4h14M3 7h14M3 11h9" stroke="#222" stroke-width="1.500"/></svg><span class="badge">5</span></button>
    </div>
  </footer>

</body>
</html>
```
FILE: styles.css
```css
* {
  box-sizing: border-box;
}

body {
  margin: 0;
  height: 100vh;
  display: flex;
  flex-direction: column;
  overflow: hidden;
  background: #27292d;
  color: #fff;
  font-family: "Liberation Sans", Arial, sans-serif;
  font-size: 18px;
}

h1, h2, p, ul {
  margin: 0;
  padding: 0;
  font-weight: normal;
}

button, input, select, textarea {
  margin: 0;
  padding: 0;
  border: 0;
  background: none;
  color: inherit;
  font: inherit;
  appearance: none;
  outline: 0;
}

button {
  display: flex;
  align-items: center;
  justify-content: center;
  flex: none;
}

svg {
  display: block;
  flex: none;
}

svg:not([fill]) {
  fill: currentColor;
}

.defs {
  position: absolute;
}

/* browser */
.browser {
  flex: none;
  background: #31191e;
  color: #f0d5da;
  font-family: "Open Sans", "Noto Sans", sans-serif;
  font-size: 14px;
}

.tab-strip {
  display: flex;
  align-items: center;
  height: 50px;
  padding-left: 8px;
}

.tab-list {
  width: 35px;
  height: 34px;
  border-radius: 12px;
  background: #50343a;
}

.tab {
  display: flex;
  align-items: center;
  gap: 10px;
  height: 42px;
  margin-top: 8px;
  padding-bottom: 8px;
}

.tab-title {
  flex: 1;
  overflow: hidden;
  white-space: nowrap;
  mask-image: linear-gradient(to right, #000 85%, transparent);
}

.tab-first {
  width: 286px;
  margin-left: 17px;
}

.tab-second {
  width: 268px;
  margin-left: 11px;
}

.tab-first .tab-title {
  mask-image: none;
}

.tab-first .tab-close {
  padding-right: 16px;
  border-right: 2px solid #50343a;
}

.tab-active {
  width: 290px;
  margin-left: 20px;
  padding: 0 12px 8px 10px;
  border-radius: 12px 12px 0 0;
  background: #4f3439;
  color: #fbe8eb;
}

.favicon {
  display: flex;
  align-items: center;
  justify-content: center;
  width: 20px;
  height: 20px;
  background: #f27a2c;
  color: #fff;
}

.new-tab {
  width: 52px;
  height: 34px;
}

.window-buttons {
  display: flex;
  margin-left: auto;
  padding-right: 1px;
}

.window-buttons button {
  width: 57px;
  height: 50px;
}

.window-buttons path {
  fill: none;
  stroke: #fff;
}

.toolbar {
  display: flex;
  align-items: center;
  height: 59px;
  padding: 0 19px 0 5px;
  border-bottom: 2px solid #54474c;
  border-radius: 10px 10px 0 0;
  background: #4f3439;
}

.nav-btn {
  width: 45px;
  height: 40px;
}

.nav-btn svg {
  fill: none;
  stroke: currentColor;
  stroke-width: 2;
}

.dim {
  color: #8b6c72;
}

.omnibox {
  display: flex;
  align-items: center;
  gap: 18px;
  flex: 1;
  height: 42px;
  margin-left: 11px;
  padding: 0 18px 0 4px;
  border-radius: 21px;
  background: #381e23;
}

.omnibox input {
  flex: 1;
  margin-left: -7px;
  color: #ecd3d8;
  font-size: 17px;
}

.site-info {
  width: 30px;
  height: 30px;
  border-radius: 50%;
  background: #50343a;
}

.media {
  margin: 0 5px 0 10px;
}

.profile {
  gap: 7px;
  width: 105px;
  height: 42px;
  border-radius: 21px;
  background: #762f45;
  color: #ffe0e8;
}

.more {
  width: 36px;
  height: 40px;
  margin: 0 -9px 0 9px;
}

/* page */
.page {
  display: flex;
  flex: 1;
  min-height: 0;
}

.rail {
  position: relative;
  display: flex;
  flex-direction: column;
  align-items: center;
  width: 125px;
  padding: 67px 20px 56px 0;
  background: #1a1a1a;
  color: #b9b9b9;
}

.rail-logo {
  display: flex;
  align-items: center;
  justify-content: center;
  width: 24px;
  height: 24px;
  border-radius: 3px;
  background: linear-gradient(135deg, #ff7a0a, #ee5040);
  color: #fff;
}

.rail-toggle {
  position: absolute;
  top: 70px;
  left: 77px;
  width: 24px;
  height: 24px;
  border-radius: 50%;
  background: #303030;
  color: #fff;
}

.rail-search {
  width: 50px;
  margin-top: 42px;
  padding-bottom: 10px;
  border-bottom: 2px solid #4a4a4a;
  color: #d5d5d5;
}

.rail-links {
  display: flex;
  flex-direction: column;
  gap: 34px;
  margin-top: 31px;
}

.rail-links a {
  display: flex;
  color: inherit;
}

.rail-bottom {
  display: flex;
  flex-direction: column;
  align-items: center;
  gap: 20px;
  margin-top: auto;
}

.rail-more {
  width: 48px;
  height: 53px;
  border: 1px solid #4a4a4a;
  border-radius: 8px;
  color: #fff;
}

.avatar {
  width: 48px;
  height: 48px;
  margin-left: 4px;
  border-radius: 50%;
  background: #2f2f2f;
  color: #fff;
  font-size: 30px;
}

.sidebar {
  display: flex;
  flex-direction: column;
  width: 295px;
  border-right: 1px solid #55565a;
  background: #1a1a1a;
  color: #d6d6d6;
}

.sidebar-body {
  padding: 11px 6px 0;
}

.app-search {
  display: flex;
  align-items: center;
  gap: 8px;
  height: 45px;
  padding-left: 15px;
  border: 1px solid #55565a;
  border-radius: 4px;
  background: #27292d;
  color: #fff;
}

.app-search input {
  flex: 1;
  min-width: 0;
}

.app-search input::placeholder {
  color: #96979a;
}

.sidebar h2 {
  margin: 29px 6px 7px;
  font-size: 18px;
  line-height: 24px;
}

.sidebar h2.first {
  margin-top: 24px;
}

.tiles {
  display: grid;
  grid-template-columns: repeat(4, 64px);
  justify-content: space-between;
  gap: 11px 0;
  padding-right: 9px;
}

.tiles button {
  height: 64px;
  border-radius: 12px;
  background: #242424;
}

.tile {
  display: flex;
  align-items: center;
  justify-content: center;
  width: 51px;
  height: 51px;
  border-radius: 12px;
  color: #fff;
}

.amber { background: linear-gradient(to right, #fdd35c, #fb6a1e); }
.red { background: linear-gradient(to right, #f24c5c, #a3021c); }
.violet { background: linear-gradient(to right, #8370fb, #3330ea); }
.green { background: linear-gradient(to right, #86cb3a, #40911f); }
.teal { background: linear-gradient(to right, #0cc6bb, #0573e6); }
.orange { background: linear-gradient(135deg, #ff7a0a, #ea4b48); }
.white { background: #fff; }
.black-icon { color: #000; }

.octagon {
  border-radius: 0;
  background: #fff;
  clip-path: polygon(30% 0, 70% 0, 100% 30%, 100% 70%, 70% 100%, 30% 100%, 0 70%, 0 30%);
}

.apps {
  display: flex;
  flex-direction: column;
  gap: 5px;
  list-style: none;
}

.apps li {
  display: flex;
  gap: 25px;
  height: 56px;
  padding: 5px;
  border-left: 2px solid #3fae7c;
  border-radius: 8px;
  background: #242424;
}

.apps a {
  color: inherit;
  font-size: 16px;
  line-height: 42px;
  text-decoration: none;
}

.apps li.selected {
  height: 62px;
  border: 3px solid #3cb482;
  border-right: 0;
  border-radius: 8px 0 0 8px;
}

.app-icon {
  display: flex;
  align-items: center;
  justify-content: center;
  width: 46px;
  height: 46px;
  overflow: hidden;
  border-radius: 10px;
  background: #fff;
}

.navy {
  background: #110d29;
}

.tools {
  background: linear-gradient(#fa8a32, #ee6519);
  color: #fff;
}

.note {
  padding: 17px 10px 0;
  color: #9c9c9c;
  font-size: 16px;
  line-height: 24px;
}

.side-tabs {
  display: flex;
  height: 70px;
  margin-top: auto;
  border-top: 1px solid #6a6a6a;
}

.side-tabs button {
  flex: 1;
  gap: 8px;
  padding-right: 30px;
}

.side-tabs .active {
  border-bottom: 2px solid #ff8544;
  color: #ff8544;
}

/* canvas */
.canvas {
  position: relative;
  display: flex;
  flex: 1;
  flex-direction: column;
  justify-content: space-between;
  overflow: hidden;
  background: #27292d;
}

.canvas-head {
  position: relative;
  width: 460px;
  padding: 32px 0 0 8px;
}

.canvas-head h1 {
  display: flex;
  align-items: center;
  gap: 10px;
  padding-left: 12px;
  font-size: 25px;
  line-height: 32px;
}

.runtime {
  position: relative;
  display: flex;
  align-items: center;
  width: 282px;
  height: 45px;
  margin-top: 23px;
  padding: 0 0 2px 15px;
  border: 1px solid #d6d6d6;
  border-radius: 10px;
}

.runtime label {
  position: absolute;
  top: -11px;
  left: 22px;
  font-size: 14px;
  line-height: 16px;
}

.chip {
  padding: 0 12px;
  border: 1px solid #48494c;
  border-radius: 18px;
  font-size: 15px;
  line-height: 34px;
}

.runtime select {
  flex: 1;
  align-self: stretch;
  padding-left: 10px;
}

.caret {
  position: absolute;
  top: 50%;
  right: 15px;
  margin-top: -3px;
  pointer-events: none;
}

.graph {
  position: absolute;
  inset: 0;
  color: #d9d9d9;
  font-family: "Open Sans", "Noto Sans", sans-serif;
}

.graph > * {
  position: absolute;
}

.edges {
  top: 0;
  left: 0;
}

.webhook {
  top: 331px;
  left: 120px;
}

.count {
  position: absolute;
  right: -2px;
  bottom: -1px;
  width: 22px;
  height: 22px;
  border-radius: 50%;
  background: #ee4238;
  font-size: 14px;
  line-height: 22px;
  text-align: center;
}

.node-label {
  font-size: 20px;
  line-height: 28px;
}

.webhook-label {
  top: 362px;
  left: 224px;
}

.regex {
  display: flex;
  align-items: center;
  justify-content: center;
  top: 359px;
  left: 428px;
  width: 54px;
  height: 54px;
  border: 5px solid #bd553f;
  border-radius: 9px;
  background: linear-gradient(to right, #0cb8bd, #0573e6);
  color: #fff;
}

.regex-label {
  top: 371px;
  left: 492px;
}

.virus {
  top: 334px;
  left: 658px;
  border-radius: 5px;
  background: #fff;
}

.virus-label {
  top: 368px;
  left: 758px;
  font-size: 14px;
  line-height: 20px;
}

.node-actions {
  top: 323px;
  left: 629px;
  display: flex;
  flex-direction: column;
  gap: 3px;
}

.node-actions button {
  width: 32px;
  height: 32px;
  border: 1px solid #000;
  border-radius: 50%;
  background: #1b1c1e;
  color: #f2f2f2;
}

.handle {
  top: 322px;
  left: 692px;
  width: 20px;
  height: 20px;
  border: 1px solid #123;
  border-radius: 50%;
  background: #337ab7;
}

.hidden-panel {
  top: 369px;
  right: -4px;
  width: 120px;
  height: 321px;
  border: 1px solid #d4803f;
  border-radius: 8px;
  background: #212121;
}

.canvas-foot {
  position: relative;
  display: flex;
  align-items: flex-end;
  gap: 32px;
  width: 900px;
  padding: 0 0 36px 23px;
}

.run-bar {
  display: flex;
  width: 410px;
  height: 61px;
  border: 1px solid #48494c;
  border-radius: 6px;
  color: #96979a;
}

.play {
  width: 62px;
  height: 57px;
  border-radius: 6px 0 0 6px;
  background: #2bc07e;
  color: #fff;
}

.walk {
  width: 68px;
}

.run-bar input {
  flex: 1;
  min-width: 0;
  padding: 0 0 3px 16px;
  border: 1px solid #5a5a5c;
  border-radius: 4px;
  background: #212121;
  font-size: 20px;
}

.run-bar input::placeholder {
  color: #8b8b8b;
}

.tool-bar {
  display: flex;
  width: 402px;
  height: 59px;
  overflow: hidden;
  border: 1px solid #48494c;
  border-radius: 6px;
  color: #96979a;
}

.tool-bar button {
  flex: 1;
}

.tool-bar .save {
  background: #4a4a4a;
  color: #fff;
}

/* settings panel */
.panel {
  position: absolute;
  top: 45px;
  right: 28px;
  bottom: 127px;
  width: 418px;
  overflow: hidden;
  padding: 11px 26px 0 17px;
  border: 1px solid #5c5d60;
  border-radius: 12px 8px 0 12px;
  background: #212121;
  color: #d0d0d0;
}

.panel input, .panel select, .panel textarea {
  color: #fff;
}

.panel-head {
  display: flex;
  align-items: flex-end;
  gap: 12px;
  margin-right: -6px;
  color: #fff;
}

.panel-icon {
  display: flex;
  align-items: center;
  justify-content: center;
  width: 37px;
  height: 37px;
  border: 2px solid #5c5c5c;
  border-radius: 5px;
}

.panel-head h2 {
  flex: 1;
  font-size: 20px;
  font-weight: bold;
  line-height: 32px;
  white-space: nowrap;
}

.version {
  position: relative;
}

.version select {
  width: 92px;
  height: 40px;
  padding: 0 0 2px 15px;
  border: 1px solid #444;
  border-radius: 14px;
}

.panel-tools {
  display: flex;
  align-items: center;
  height: 34px;
  margin-top: 19px;
}

.panel-tools button {
  margin-right: 27px;
}

.panel-tools button:first-child {
  margin: 0 35px 0 10px;
}

.panel-tools .rerun {
  gap: 12px;
  width: 111px;
  height: 34px;
  margin: 0 19px 0 auto;
  padding-left: 8px;
  border: 1px solid #d0d0d0;
  border-radius: 4px;
  color: #b8b8b8;
  font-size: 16px;
}

.name-row {
  display: flex;
  gap: 4px;
  margin-top: 35px;
}

.panel label {
  display: block;
  line-height: 24px;
}

.name-row input {
  width: 100%;
  height: 47px;
  margin-top: 2px;
  padding-left: 14px;
  border: 2px solid #474747;
  border-radius: 5px;
}

.name-field {
  flex: 1;
}

.delay-field {
  width: 61px;
}

.panel hr {
  height: 2px;
  margin: 22px 0 23px;
  border: 0;
  background: #606060;
}

.find {
  position: relative;
}

.panel .find label {
  position: absolute;
  top: -10px;
  left: 10px;
  padding: 0 6px;
  background: #212121;
  color: #fff;
  font-size: 14px;
  line-height: 16px;
}

.find select {
  width: 100%;
  height: 45px;
  padding: 0 0 2px 14px;
  border: 1px solid #4a4a4a;
  border-radius: 4px;
}

.find .caret, .version .caret {
  color: #fff;
}

.find .caret {
  right: 18px;
}

.param-head {
  display: flex;
  justify-content: space-between;
}

.input-head {
  margin: 55px 4px 10px 0;
}

.regex-head {
  margin: 22px -2px 6px 0;
}

.param-head sup {
  color: #f0703c;
  font-size: 16px;
  line-height: 0;
  vertical-align: 3px;
}

.param {
  display: flex;
  align-items: center;
  margin-right: -2px;
  padding: 0 16px 0 15px;
  border: 1px solid #d4803f;
  border-radius: 4px;
}

.param.tall {
  padding-right: 21px;
}

.param textarea, .param input {
  flex: 1;
  min-width: 0;
  height: 45px;
  resize: none;
}

.param textarea {
  height: 114px;
  padding-top: 20px;
}

.scroll-track {
  position: absolute;
  top: 0;
  right: 0;
  bottom: 0;
  width: 10px;
  background: #191919;
}

.scroll-thumb {
  display: block;
  height: 78%;
  border-radius: 5px;
  background: #4c4c4c;
}

.scroll-corner {
  position: absolute;
  right: 0;
  bottom: 0;
  width: 9px;
  height: 9px;
  background: #fff;
}

/* taskbar */
.taskbar {
  display: flex;
  flex: none;
  height: 50px;
  background: linear-gradient(to right, #1c1c1c 70%, #303030 74%, #2b2b2b 80%, #3a3a3a 86%, #1f1f1f 94%);
  font-family: "Open Sans", "Noto Sans", sans-serif;
}

.start {
  width: 60px;
}

.task-search {
  display: flex;
  align-items: center;
  gap: 14px;
  width: 360px;
  padding-left: 14px;
  border: 1px solid #555;
  background: #323232;
}

.task-search input {
  width: 204px;
}

.task-search input::placeholder {
  color: #dcdcdc;
}

.task-apps {
  display: flex;
  gap: 1px;
  padding-left: 1px;
}

.task-apps button {
  position: relative;
  width: 61px;
}

.task-apps .open::after {
  content: "";
  position: absolute;
  right: 5px;
  bottom: 0;
  left: 5px;
  height: 3px;
  background: #76b9ed;
}

.task-apps .current {
  background: #484848;
}

.task-apps .current::after {
  right: 0;
  left: 0;
}

.mini {
  position: absolute;
  right: 14px;
  bottom: 8px;
  width: 18px;
  height: 18px;
  border-radius: 50%;
  background: linear-gradient(#a8793a, #5a3014 60%, #26392e);
}

.badge {
  position: absolute;
  right: 5px;
  bottom: 6px;
  width: 20px;
  height: 20px;
  border: 1px solid #999;
  border-radius: 50%;
  background: #2a2a2a;
  color: #fff;
  font-size: 13px;
  line-height: 18px;
  text-align: center;
}

.dbg {
  fill: #fff;
  font-size: 11px;
  font-weight: bold;
}

.dark {
  fill: #111;
}

.tray {
  display: flex;
  align-items: center;
  margin-left: auto;
  padding-right: 5px;
}

.weather {
  display: flex;
  align-items: center;
  gap: 10px;
  font-size: 17px;
}

.weather text {
  fill: #fff;
  font-size: 11px;
}

.tray-icons {
  display: flex;
  align-items: center;
  gap: 12px;
  margin: 0 15px 0 28px;
}

.tray-icons svg {
  fill: none;
  stroke: #eee;
}

.clock {
  display: flex;
  flex-direction: column;
  align-items: center;
  font-size: 14px;
  line-height: 23px;
}

.notices {
  position: relative;
  width: 70px;
  height: 50px;
  padding-bottom: 6px;
}

.notices .badge {
  right: 16px;
  bottom: 5px;
}
```
